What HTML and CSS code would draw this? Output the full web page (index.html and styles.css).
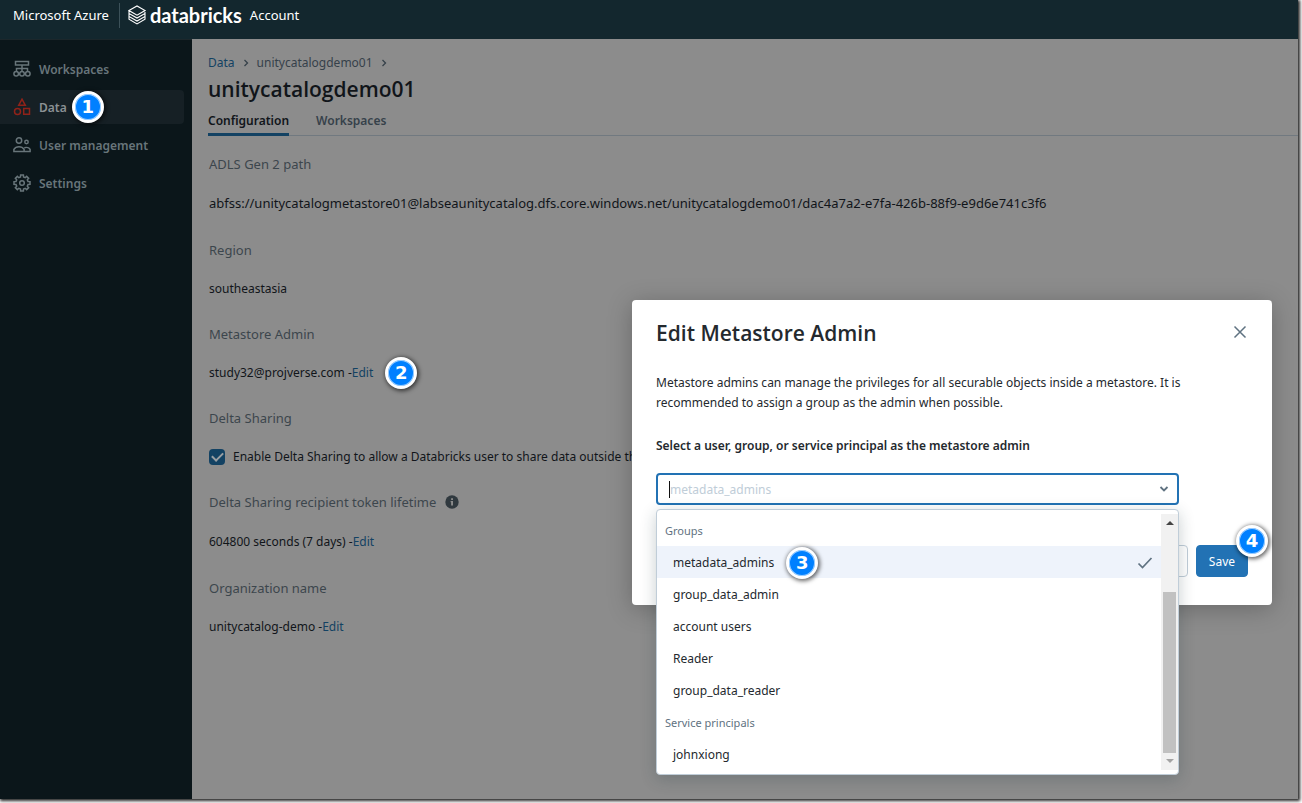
FILE: index.html
```html
<!DOCTYPE html>
<html lang="en">
<head>
<meta charset="utf-8">
<title>unitycatalogdemo01 - Databricks Account</title>
<link rel="stylesheet" href="styles.css">
</head>
<body>
<div class="app">
  <header class="topbar">
    <span class="azure">Microsoft Azure</span>
    <span class="brand">
      <svg class="brand-mark" viewBox="0 0 18 20" aria-hidden="true"><path d="M1 5.600 9 1l8 4.600-8 4.600zM1 5.600v2.900l8 4.600 8-4.600V5.600M1 8.500v2.900L9 16l8-4.600V8.500M1 11.400v2.900l8 4.600 8-4.600v-2.900"/></svg>
      <span class="brand-name">databricks</span>
    </span>
    <span class="account">Account</span>
  </header>
  <div class="shell">
    <nav class="sidebar">
      <a class="nav-item" href="#"><svg class="nav-icon" viewBox="0 0 18 18" aria-hidden="true"><path d="M2.500 1.500h13v3.500h-13zM9 5v6M3.500 11V8.500h11V11"/><circle cx="3.200" cy="13.800" r="2.300"/><circle cx="9" cy="13.800" r="2.300"/><circle cx="14.800" cy="13.800" r="2.300"/></svg><span class="nav-text">Workspaces</span></a>
      <a class="nav-item nav-item-active" href="#"><svg class="nav-icon" viewBox="0 0 18 18" aria-hidden="true"><path d="M9 1.200 12.300 7.300H5.700zM10.700 10.500h5.800v5.800h-5.800z"/><circle cx="4.500" cy="13.400" r="3"/></svg><span class="nav-text">Data</span><span class="step">1</span></a>
      <a class="nav-item" href="#"><svg class="nav-icon" viewBox="0 0 18 18" aria-hidden="true"><circle cx="6" cy="4.500" r="2.700"/><circle cx="13.500" cy="6" r="1.700"/><path d="M.9 15.500v-2.200c1-1.600 2.900-2.600 5.100-2.600s4.100 1 5.100 2.600v2.200zM11.100 15.500h6v-2.200c-.8-1.500-3.300-2.400-5.800-1.500"/></svg><span class="nav-text">User management</span></a>
      <a class="nav-item" href="#"><svg class="nav-icon" viewBox="0 0 18 18" aria-hidden="true"><path d="M7.500 3 7.600 1h2.800l.1 2 1.700.7 1.450-1.340 2 2-1.340 1.450.7 1.690 2 .1v2.800l-2 .1-.7 1.690 1.340 1.450-2 2-1.450-1.340-1.700.7-.1 2H7.600l-.1-2-1.700-.7-1.450 1.340-2-2 1.340-1.450-.7-1.690-2-.1V7.600l2-.1.7-1.690-1.340-1.450 2-2L5.800 3.700z"/><circle cx="9" cy="9" r="2.300"/></svg><span class="nav-text">Settings</span></a>
    </nav>
    <main class="content">
      <div class="breadcrumb">
        <a class="link" href="#">Data</a>
        <svg class="crumb-sep" viewBox="0 0 8 8" aria-hidden="true"><path d="m2.500 1 3 3-3 3"/></svg>
        <span>unitycatalogdemo01</span>
        <svg class="crumb-sep" viewBox="0 0 8 8" aria-hidden="true"><path d="m2.500 1 3 3-3 3"/></svg>
      </div>
      <h1 class="title">unitycatalogdemo01</h1>
      <div class="tabs" role="tablist">
        <button class="tab tab-active" role="tab" aria-selected="true">Configuration</button>
        <button class="tab" role="tab" aria-selected="false">Workspaces</button>
      </div>
      <dl class="fields">
        <div class="field field-tall"><dt>ADLS Gen 2 path</dt><dd class="path">abfss://unitycatalogmetastore01@labseaunitycatalog.dfs.core.windows.net/unitycatalogdemo01/dac4a7a2-e7fa-426b-88f9-e9d6e741c3f6</dd></div>
        <div class="field"><dt>Region</dt><dd>southeastasia</dd></div>
        <div class="field"><dt>Metastore Admin</dt><dd>study32@projverse.com -<a class="link" href="#">Edit</a><span class="step">2</span></dd></div>
        <div class="field"><dt>Delta Sharing</dt><dd><label class="check"><input type="checkbox" checked>Enable Delta Sharing to allow a Databricks user to share data outside their</label></dd></div>
        <div class="field field-tall"><dt>Delta Sharing recipient token lifetime <svg class="info" viewBox="0 0 14 14" aria-hidden="true"><circle cx="7" cy="7" r="6.700"/><path d="M6.100 3.200h1.900v1.700H6.100zM5.600 6h2.400v4.600H6.100V7.300h-.5z"/></svg></dt><dd>604800 seconds (7 days) -<a class="link" href="#">Edit</a></dd></div>
        <div class="field"><dt>Organization name</dt><dd>unitycatalog-demo -<a class="link" href="#">Edit</a></dd></div>
      </dl>
    </main>
  </div>
</div>

<section class="modal" role="dialog" aria-labelledby="modal-title">
  <div class="modal-head">
    <h2 class="modal-title" id="modal-title">Edit Metastore Admin</h2>
    <button class="close" aria-label="Close"><svg viewBox="0 0 14 14" aria-hidden="true"><path d="m1.500 1.500 11 11m0-11-11 11"/></svg></button>
  </div>
  <p class="modal-text">Metastore admins can manage the privileges for all securable objects inside a metastore. It is recommended to assign a group as the admin when possible.</p>
  <label class="modal-label" for="admin">Select a user, group, or service principal as the metastore admin</label>
  <div class="picker">
    <div class="combo">
      <input class="combo-input" id="admin" type="text" role="combobox" aria-expanded="true" aria-controls="admin-list" placeholder="metadata_admins">
      <svg class="chevron" viewBox="0 0 10 10" aria-hidden="true"><path d="m1.500 3 3.500 3.500L8.500 3"/></svg>
    </div>
    <div class="menu">
      <div class="options" id="admin-list" role="listbox">
        <div class="group">Groups</div>
        <div class="option option-selected" role="option" aria-selected="true">metadata_admins<span class="step">3</span><svg class="tick" viewBox="0 0 16 14" aria-hidden="true"><path d="m1.500 7.500 4 4L14.500 2"/></svg></div>
        <div class="option" role="option">group_data_admin</div>
        <div class="option" role="option">account users</div>
        <div class="option" role="option">Reader</div>
        <div class="option" role="option">group_data_reader</div>
        <div class="group">Service principals</div>
        <div class="option" role="option">johnxiong</div>
      </div>
      <div class="scroll" aria-hidden="true">
        <svg class="arrow" viewBox="0 0 8 4"><path d="M0 4h8L4 0z"/></svg>
        <div class="thumb"></div>
        <svg class="arrow arrow-off" viewBox="0 0 8 4"><path d="M0 0h8L4 4z"/></svg>
      </div>
    </div>
  </div>
  <div class="actions">
    <button class="btn">Cancel</button>
    <button class="btn btn-primary">Save<span class="step step-corner">4</span></button>
  </div>
</section>
</body>
</html>
```
FILE: styles.css
```css
* { box-sizing: border-box; }

body {
  margin: 0;
  padding: 0 4px 4px 0;
  background: #fff;
  font: 12px/20px "Noto Sans", "Open Sans", sans-serif;
  color: #11151a;
}

button, input { font: inherit; color: inherit; }
a { text-decoration: none; }
svg { flex: none; fill: none; stroke: currentColor; }

.app {
  display: flex;
  flex-direction: column;
  min-height: calc(100vh - 4px);
  background: #8c8c8c;
  box-shadow: 1px 1px 3px 1px #222;
}

.topbar {
  display: flex;
  align-items: flex-start;
  height: 39px;
  padding: 3px 13px;
  background: #13272e;
  color: #fff;
  font-size: 13px;
  line-height: 25px;
}
.azure { padding-right: 10px; border-right: 1px solid #3c5159; }
.brand { display: flex; align-items: center; gap: 4px; padding: 0 8px; }
.brand-mark { width: 18px; height: 20px; stroke-width: 1.1; }
.brand-name { font: 700 20px/24px Lato, sans-serif; }

.shell { display: flex; flex: 1; }

.sidebar {
  display: flex;
  flex-direction: column;
  flex: none;
  gap: 4px;
  width: 192px;
  padding: 12px 8px 0 0;
  background: #0b161a;
  border-top: 1px solid #1c272b;
}
.nav-item {
  display: flex;
  align-items: center;
  height: 34px;
  padding-left: 13px;
  border-radius: 0 4px 4px 0;
  color: #68757a;
  font-weight: 600;
}
.nav-icon { width: 18px; height: 18px; margin-right: 8px; stroke-width: 1.5; }
.nav-text { padding-top: 2px; }
.nav-item-active { background: #162025; color: #8b9194; }
.nav-item-active .nav-icon { color: #8f2219; }
.nav-item .step { margin-left: 5px; }

.step {
  display: inline-flex;
  align-items: center;
  justify-content: center;
  flex: none;
  width: 32px;
  height: 32px;
  border: 3px solid #fff;
  border-radius: 50%;
  background: #0080ff;
  box-shadow: inset 0 0 0 1px #9cceff, 1px 1px 4px 1px rgba(0, 0, 0, .6);
  color: #fff;
  font: 700 18px/20px "DejaVu Sans", sans-serif;
}

.content { flex: 1; min-width: 0; padding: 14px 0 0 16px; }
.link { color: #134263; }
.breadcrumb { display: flex; align-items: center; gap: 7px; color: #36414a; }
.crumb-sep { width: 8px; height: 8px; stroke-width: 1.3; }
.title { margin: 2px 0 5px; font: 600 21px/28px "Open Sans", sans-serif; }
.tabs { display: flex; gap: 27px; border-bottom: 1px solid #717980; }
.tab {
  padding: 3px 0 2px;
  margin-bottom: -1px;
  border: 0;
  border-bottom: 3px solid transparent;
  background: none;
  color: #36414a;
  font-weight: 600;
}
.tab-active { border-color: #134263; color: #11151a; }

.fields { display: grid; gap: 25px; margin: 18px 0 0; padding-left: 1px; }
.field { display: grid; grid-template-rows: 20px 20px; gap: 19px; }
.field-tall { grid-template-rows: 20px 22px; }
dt { display: flex; align-items: center; gap: 9px; color: #3c464d; font-size: 13px; }
dd { display: flex; align-items: center; margin: 0; white-space: pre; }
dd .step { margin-left: 12px; }
.path { height: 20px; font-size: 13px; }
.info { width: 14px; height: 14px; fill: #30393f; stroke: none; }
.info path { fill: #8c8c8c; }
.check { display: flex; align-items: center; gap: 8px; }
.check input {
  appearance: none;
  width: 16px;
  height: 16px;
  margin: 0;
  border-radius: 4px;
  background: #134263;
  display: grid;
  place-items: center;
}
.check input::after {
  content: "";
  width: 9px;
  height: 5px;
  margin-top: -3px;
  border: solid #9a9fa3;
  border-width: 0 0 2px 2px;
  transform: rotate(-45deg);
}

.modal {
  position: absolute;
  top: 300px;
  right: 30px;
  width: 640px;
  padding: 18px 24px 28px;
  border-radius: 4px;
  background: #fff;
  box-shadow: 0 4px 24px rgba(0, 0, 0, .25);
  color: #24292e;
}
.modal-head { display: flex; justify-content: space-between; align-items: center; }
.modal-title { margin: 0; font: 600 21px/30px "Open Sans", sans-serif; }
.close { display: flex; width: 16px; padding: 0 1px 2px; border: 0; background: none; color: #5f7281; }
.close svg { width: 14px; height: 14px; stroke-width: 1.5; }
.modal-text { max-width: 560px; margin: 25px 0 23px; }
.modal-label { display: block; font-weight: 600; }
.picker { position: relative; width: 523px; margin-top: 17px; }
.combo {
  display: flex;
  align-items: center;
  height: 32px;
  padding: 0 8px 0 11px;
  border: 2px solid #2272b4;
  border-radius: 4px;
}
.combo::before { content: ""; width: 1px; height: 17px; background: #111; }
.combo-input { flex: 1; min-width: 0; padding: 2px 0 0; border: 0; outline: 0; background: none; }
.combo-input::placeholder { color: #c0cdd8; opacity: 1; }
.chevron { width: 10px; height: 10px; color: #5f7281; stroke-width: 1.8; }

.menu {
  position: absolute;
  top: 36px;
  left: 0;
  right: 0;
  z-index: 1;
  display: flex;
  padding: 4px 0;
  border: 1px solid #c0cdd8;
  border-radius: 4px;
  background: #fff;
  box-shadow: 0 4px 16px rgba(27, 49, 57, .24);
}
.options { flex: 1; }
.group, .option { display: flex; align-items: center; height: 32px; }
.group { padding: 2px 0 0 8px; color: #5f7281; font-size: 11px; }
.option { padding: 2px 8px 0 16px; }
.option-selected { background: #eef3fb; }
.option .step { margin-left: 12px; }
.tick { width: 16px; height: 14px; margin-left: auto; color: #5f7281; stroke-width: 1.7; }
.scroll {
  display: flex;
  flex-direction: column;
  align-items: center;
  width: 17px;
  padding: 7px 2px;
  background: #f1f1f1;
}
.arrow { width: 8px; height: 4px; fill: #444; stroke: none; }
.arrow-off { margin-top: 6px; fill: #a3a3a3; }
.thumb { width: 13px; flex: 1; margin-top: 67px; background: #c1c1c1; }

.actions { display: flex; justify-content: flex-end; gap: 8px; margin-top: 40px; }
.btn {
  position: relative;
  height: 32px;
  padding: 2px 12px 0;
  border: 1px solid #c0cdd8;
  border-radius: 4px;
  background: #fff;
}
.btn-primary { border-color: #2272b4; background: #2272b4; color: #fff; }
.step-corner { position: absolute; top: -21px; right: -21px; }
```
